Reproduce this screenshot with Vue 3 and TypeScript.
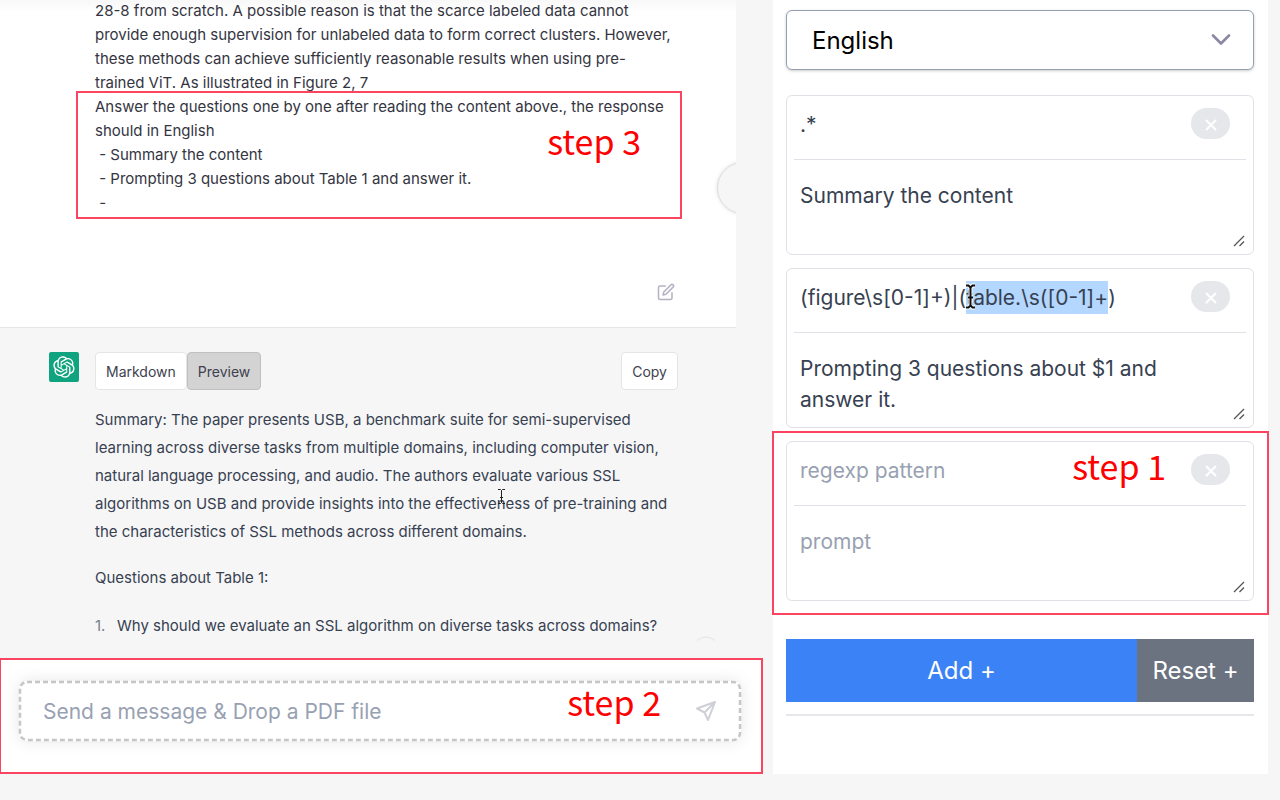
<script setup lang="ts">
import { onMounted, ref } from 'vue'

interface Rule {
  id: number
  pattern: string
  prompt: string
}

const rules = ref<Rule[]>([
  { id: 1, pattern: '.*', prompt: 'Summary the content' },
  { id: 2, pattern: '(figure\\s[0-1]+)|(table.\\s([0-1]+)', prompt: 'Prompting 3 questions about $1 and answer it.' },
  { id: 3, pattern: '', prompt: '' },
])

const language = ref('English')
const message = ref('')
const view = ref<'markdown' | 'preview'>('preview')
const panel = ref<HTMLElement | null>(null)

const paperLines = [
  '28-8 from scratch. A possible reason is that the scarce labeled data cannot',
  'provide enough supervision for unlabeled data to form correct clusters. However,',
  'these methods can achieve sufficiently reasonable results when using pre-',
  'trained ViT. As illustrated in Figure 2, 7',
].join('\n')

const questionLines = [
  'Answer the questions one by one after reading the content above., the response',
  'should in English',
  ' - Summary the content',
  ' - Prompting 3 questions about Table 1 and answer it.',
  ' -',
]

const summaryLines = [
  'Summary: The paper presents USB, a benchmark suite for semi-supervised',
  'learning across diverse tasks from multiple domains, including computer vision,',
  'natural language processing, and audio. The authors evaluate various SSL',
  'algorithms on USB and provide insights into the effectiveness of pre-training and',
  'the characteristics of SSL methods across different domains.',
].join('\n')

function addRule() {
  const id = Math.max(0, ...rules.value.map((r) => r.id)) + 1
  rules.value.push({ id, pattern: '', prompt: '' })
}

function removeRule(id: number) {
  rules.value = rules.value.filter((r) => r.id !== id)
}

function resetRules() {
  rules.value = [{ id: 1, pattern: '', prompt: '' }]
}

onMounted(() => {
  const field = panel.value?.querySelector<HTMLInputElement>('#pattern-2')
  if (field) {
    field.focus({ preventScroll: true })
    field.setSelectionRange(field.value.indexOf('table'), field.value.length - 1)
  }
})
</script>

<template>
  <div class="page">
    <main class="left">
      <div class="chat">
        <section class="user">
          <div class="user-text">
            <p class="lines">{{ paperLines }}</p>
            <div class="question">
              <p v-for="line in questionLines" :key="line" class="lines">{{ line }}</p>
              <div class="callout callout-3"><span class="step">step 3</span></div>
            </div>
          </div>
          <button class="icon-btn edit" type="button" aria-label="Edit message">
            <svg width="18" height="18" viewBox="0 0 24 24" fill="none" stroke="currentColor" stroke-width="2" stroke-linecap="round" stroke-linejoin="round">
              <path d="M11 4H4a2 2 0 0 0-2 2v14a2 2 0 0 0 2 2h14a2 2 0 0 0 2-2v-7" />
              <path d="M18.500 2.500a2.121 2.121 0 0 1 3 3L12 15l-4 1 1-4 9.500-9.500z" />
            </svg>
          </button>
          <div class="bubble"></div>
        </section>

        <section class="assistant">
          <div class="avatar">
            <svg width="22" height="22" viewBox="0 0 41 41" fill="currentColor">
              <path d="M37.5324 16.8707C37.9808 15.5241 38.1363 14.0974 37.9886 12.6859C37.8409 11.2744 37.3934 9.91076 36.676 8.68622C35.6126 6.83404 33.9882 5.3676 32.0373 4.4985C30.0864 3.62941 27.9098 3.40259 25.8215 3.85078C24.8796 2.7893 23.7219 1.94125 22.4257 1.36341C21.1295 0.785575 19.7249 0.491269 18.3058 0.500197C16.1708 0.495044 14.0893 1.16803 12.3614 2.42214C10.6335 3.67624 9.34853 5.44666 8.6917 7.47815C7.30085 7.76286 5.98686 8.3414 4.8377 9.17505C3.68854 10.0087 2.73073 11.0782 2.02839 12.312C0.956464 14.1591 0.498905 16.2988 0.721698 18.4228C0.944492 20.5467 1.83612 22.5449 3.268 24.1293C2.81966 25.4759 2.66413 26.9026 2.81182 28.3141C2.95951 29.7256 3.40701 31.0892 4.12437 32.3138C5.18791 34.1659 6.8123 35.6322 8.76321 36.5013C10.7141 37.3704 12.8907 37.5973 14.9789 37.1492C15.9208 38.2107 17.0786 39.0587 18.3747 39.6366C19.6709 40.2144 21.0755 40.5087 22.4946 40.4998C24.6307 40.5054 26.7133 39.8321 28.4418 38.5772C30.1704 37.3223 31.4556 35.5506 32.1119 33.5179C33.5027 33.2332 34.8167 32.6547 35.9659 31.821C37.115 30.9874 38.0728 29.9178 38.7752 28.684C39.8458 26.8371 40.3023 24.6979 40.0789 22.5748C39.8556 20.4517 38.9639 18.4544 37.5324 16.8707ZM22.4978 37.8849C20.7443 37.8874 19.0459 37.2733 17.6994 36.1501C17.7601 36.117 17.8666 36.0586 17.936 36.0161L25.9004 31.4156C26.1003 31.3019 26.2663 31.137 26.3813 30.9378C26.4964 30.7386 26.5563 30.5124 26.5549 30.2825V19.0542L29.9213 20.998C29.9389 21.0068 29.9541 21.0198 29.9656 21.0359C29.977 21.052 29.9842 21.0707 29.9867 21.0902V30.3889C29.9842 32.375 29.1946 34.2791 27.7909 35.6841C26.3872 37.0892 24.4838 37.8806 22.4978 37.8849ZM6.39227 31.0064C5.51397 29.4888 5.19742 27.7107 5.49804 25.9832C5.55718 26.0187 5.66048 26.0818 5.73461 26.1244L13.699 30.7248C13.8975 30.8408 14.1233 30.902 14.3532 30.902C14.583 30.902 14.8088 30.8408 15.0073 30.7248L24.731 25.1103V28.9979C24.7321 29.0177 24.7283 29.0376 24.7199 29.0556C24.7115 29.0736 24.6988 29.0893 24.6829 29.1012L16.6317 33.7497C14.9096 34.7416 12.8643 35.0097 10.9447 34.4954C9.02506 33.9811 7.38785 32.7263 6.39227 31.0064ZM4.29707 13.6194C5.17156 12.0998 6.55279 10.9364 8.19885 10.3327C8.19885 10.4013 8.19491 10.5228 8.19491 10.6071V19.808C8.19351 20.0378 8.25334 20.2638 8.36823 20.4629C8.48312 20.6619 8.64893 20.8267 8.84863 20.9404L18.5723 26.5542L15.206 28.4979C15.1894 28.5089 15.1703 28.5155 15.1505 28.5173C15.1307 28.5191 15.1107 28.516 15.0924 28.5082L7.04046 23.8557C5.32135 22.8601 4.06716 21.2235 3.55289 19.3046C3.03862 17.3858 3.30624 15.3413 4.29707 13.6194ZM31.955 20.0556L22.2312 14.4411L25.5976 12.4981C25.6142 12.4872 25.6333 12.4805 25.6531 12.4787C25.6729 12.4769 25.6928 12.4801 25.7111 12.4879L33.7631 17.1364C34.9967 17.849 36.0017 18.8982 36.6606 20.1613C37.3194 21.4244 37.6047 22.849 37.4832 24.2684C37.3617 25.6878 36.8382 27.0432 35.9743 28.1759C35.1103 29.3086 33.9415 30.1717 32.6047 30.6641C32.6047 30.5947 32.6047 30.4733 32.6047 30.3889V21.188C32.6066 20.9586 32.5474 20.7328 32.4332 20.5338C32.319 20.3348 32.154 20.1698 31.955 20.0556ZM35.3055 15.0128C35.2464 14.9765 35.1431 14.9142 35.069 14.8717L27.1045 10.2712C26.906 10.1554 26.6803 10.0943 26.4504 10.0943C26.2206 10.0943 25.9948 10.1554 25.7963 10.2712L16.0726 15.8858V11.9982C16.0715 11.9783 16.0753 11.9585 16.0837 11.9405C16.0921 11.9225 16.1048 11.9068 16.1207 11.8949L24.1719 7.25025C25.4053 6.53903 26.8158 6.19376 28.2383 6.25482C29.6608 6.31589 31.0364 6.78077 32.2044 7.59508C33.3723 8.40939 34.2842 9.53945 34.8334 10.8531C35.3826 12.1667 35.5464 13.6095 35.3055 15.0128ZM14.2424 21.9419L10.8752 19.9981C10.8576 19.9893 10.8423 19.9763 10.8309 19.9602C10.8195 19.9441 10.8122 19.9254 10.8098 19.9058V10.6071C10.8107 9.18295 11.2173 7.78848 11.9819 6.58696C12.7466 5.38544 13.8377 4.42659 15.1275 3.82264C16.4173 3.21869 17.8524 2.99464 19.2649 3.1767C20.6775 3.35876 22.0089 3.93941 23.1034 4.85067C23.0427 4.88379 22.937 4.94215 22.8668 4.98473L14.9024 9.58517C14.7025 9.69878 14.5366 9.86356 14.4215 10.0626C14.3065 10.2616 14.2466 10.4877 14.2479 10.7175L14.2424 21.9419ZM16.071 17.9991L20.4018 15.4978L24.7325 17.9975V22.9985L20.4018 25.4983L16.071 22.9985V17.9991Z" />
            </svg>
          </div>
          <div class="answer">
            <div class="toolbar">
              <button class="tab" :class="{ active: view === 'markdown' }" type="button" @click="view = 'markdown'">Markdown</button>
              <button class="tab" :class="{ active: view === 'preview' }" type="button" @click="view = 'preview'">Preview</button>
              <button class="tab copy" type="button">Copy</button>
            </div>
            <div class="summary">
              <p class="lines">{{ summaryLines }}</p>
              <svg class="ibeam" width="9" height="17" viewBox="0 0 9 17" fill="none" stroke="#222" stroke-width="1">
                <path d="M1 1.500h2.500l1 1 1-1H8M4.500 2.500v12M1 15.500h2.500l1-1 1 1H8M3 9.500h3" />
              </svg>
            </div>
            <p class="about">Questions about Table 1:</p>
            <ol class="list">
              <li><span class="num">1.</span>Why should we evaluate an SSL algorithm on diverse tasks across domains?</li>
            </ol>
          </div>
          <svg class="arc" width="20" height="6" viewBox="0 0 20 6" fill="none" stroke="#e4e4e9" stroke-width="1">
            <path d="M1 4.500Q10-2.500 19 4.500" />
          </svg>
        </section>
      </div>

      <form class="composer" @submit.prevent>
        <div class="drop">
          <svg class="dashes" fill="none" stroke="#c6c6c6" stroke-width="2.500" stroke-dasharray="5 3">
            <rect width="100%" height="100%" rx="7" />
          </svg>
          <input v-model="message" type="text" aria-label="Message" placeholder="Send a message &amp; Drop a PDF file" />
          <button class="icon-btn send" type="submit" aria-label="Send">
            <svg width="22" height="22" viewBox="0 0 22 22" fill="none" stroke="currentColor" stroke-width="2" stroke-linejoin="round">
              <path d="M20 2 2 8.500l7.500 4L13 20zM20 2 9.500 12.500" />
            </svg>
          </button>
        </div>
        <span class="step step-2">step 2</span>
      </form>
    </main>

    <aside ref="panel" class="panel">
      <div class="select">
        <select v-model="language" aria-label="Language">
          <option>English</option>
        </select>
        <svg class="chevron" width="20" height="12" viewBox="0 0 20 12" fill="none" stroke="#8a89a3" stroke-width="2.600" stroke-linecap="round" stroke-linejoin="round">
          <path d="M2 1.500l8 8 8-8" />
        </svg>
      </div>

      <div class="cards">
        <div v-for="rule in rules" :key="rule.id" class="card">
          <div class="card-top">
            <input :id="`pattern-${rule.id}`" v-model="rule.pattern" class="pattern" type="text" aria-label="Pattern" placeholder="regexp pattern" spellcheck="false" />
            <button class="remove" type="button" aria-label="Remove" @click="removeRule(rule.id)">
              <svg width="12" height="12" viewBox="0 0 12 12" fill="none" stroke="#fff" stroke-width="2" stroke-linecap="round">
                <path d="M1.500 1.500l9 9M10.500 1.500l-9 9" />
              </svg>
            </button>
            <svg v-if="rule.id === 2" class="ibeam-big" width="13" height="27" viewBox="0 0 13 27" fill="none">
              <path d="M2 2.500h2.500l2 2 2-2H11M6.500 4.500v18M2 24.500h2.500l2-2 2 2H11M4 14.500h5" stroke="#fff" stroke-width="4" />
              <path d="M2 2.500h2.500l2 2 2-2H11M6.500 4.500v18M2 24.500h2.500l2-2 2 2H11M4 14.500h5" stroke="#111" stroke-width="2" />
            </svg>
          </div>
          <textarea v-model="rule.prompt" class="prompt" aria-label="Prompt" placeholder="prompt" spellcheck="false"></textarea>
          <svg class="grip" width="12" height="12" viewBox="0 0 12 12" stroke="#555" stroke-width="1.300">
            <path d="M1 11L11 1M6.500 11L11 6.500" />
          </svg>
          <div v-if="rule.id === 3" class="callout callout-1"><span class="step">step 1</span></div>
        </div>
      </div>

      <div class="actions">
        <button class="add" type="button" @click="addRule">Add +</button>
        <button class="reset" type="button" @click="resetRules">Reset +</button>
      </div>
      <hr />
    </aside>
  </div>
</template>

<style>
body {
  margin: 0;
  background: #f6f6f6;
}
</style>

<style scoped>
.page {
  display: grid;
  grid-template-columns: minmax(0, 763fr) minmax(0, 495fr);
  gap: 10px;
  padding: 0 12px 26px 0;
  align-items: stretch;
  font-family: Inter, "Liberation Sans", sans-serif;
  color: #343541;
  overflow: hidden;
}
.page *,
.page *::before {
  box-sizing: border-box;
}
p,
ol {
  margin: 0;
  padding: 0;
  list-style: none;
}
button,
input,
select,
textarea {
  font-family: inherit;
  color: inherit;
  margin: 0;
}
.left {
  display: flex;
  flex-direction: column;
}
.chat {
  margin-right: 27px;
  flex: 1;
}
.lines {
  white-space: pre;
}
.user {
  position: relative;
  overflow: hidden;
  display: flex;
  flex-direction: column;
  gap: 68px;
  padding: 0 58px 26px 95px;
  background: linear-gradient(#f8f8f8, #fff 12px);
  border-bottom: 1px solid #e6e6e6;
}
.user-text {
  margin-top: -1px;
  font-size: 15px;
  line-height: 24px;
}
.question {
  position: relative;
}
.question .lines {
  width: fit-content;
}
.callout {
  position: absolute;
  border: 2px solid #fb4560;
  pointer-events: none;
}
.callout-3 {
  inset: -4px -4px -4px -19px;
}
.step {
  position: absolute;
  color: #f00;
  font-family: "Noto Sans CJK SC", sans-serif;
  font-size: 34px;
  line-height: 40px;
  white-space: nowrap;
  pointer-events: none;
}
.callout-3 .step {
  right: 39px;
  top: 28px;
}
.icon-btn {
  border: 0;
  background: none;
  padding: 0;
  display: flex;
}
.edit {
  align-self: flex-end;
  margin-right: 3px;
  color: #b3b3c3;
}
.bubble {
  position: absolute;
  right: -33px;
  top: 162px;
  width: 52px;
  height: 52px;
  border-radius: 50%;
  border: 1px solid #dedede;
  background: #f6f6f6;
  box-shadow: 0 0 4px rgba(0, 0, 0, 0.12);
}
.assistant {
  position: relative;
  display: flex;
  gap: 16px;
  padding: 24px 58px 18px 49px;
}
.avatar {
  flex: none;
  display: flex;
  align-items: center;
  justify-content: center;
  width: 30px;
  height: 30px;
  border-radius: 2px;
  background: #10a37f;
  color: #fff;
}
.answer {
  flex: 1;
  min-width: 0;
  font-size: 15px;
  line-height: 28px;
  color: #374151;
}
.toolbar {
  display: flex;
  margin-bottom: 16px;
}
.tab {
  height: 38px;
  padding: 0 10px;
  border: 1px solid #e5e5e5;
  border-radius: 4px;
  background: #fff;
  color: #40414f;
  font-size: 14px;
}
.tab.active {
  background: #d3d3d3;
  border-color: #c0c0c0;
}
.copy {
  margin-left: auto;
}
.summary {
  position: relative;
  margin-bottom: 18px;
}
.ibeam {
  position: absolute;
  left: 402px;
  top: 82px;
}
.about {
  margin-bottom: 20px;
}
.list li {
  display: flex;
  white-space: nowrap;
}
.num {
  width: 22px;
  color: #7b8190;
}
.arc {
  position: absolute;
  right: 20px;
  bottom: 16px;
}
.composer {
  position: relative;
  border: 2px solid #fb4560;
  border-left-width: 1px;
  background: #fff;
  padding: 21px 20px 31px 18px;
}
.drop {
  position: relative;
  display: flex;
  align-items: center;
  height: 60px;
  padding: 0 24px;
  border-radius: 8px;
  box-shadow: 0 0 16px rgba(0, 0, 0, 0.1);
}
.dashes {
  position: absolute;
  left: 1px;
  top: 1px;
  width: calc(100% - 2px);
  height: calc(100% - 2px);
  overflow: visible;
  pointer-events: none;
}
.drop input {
  flex: 1;
  min-width: 0;
  border: 0;
  padding: 0;
  outline: 0;
  background: none;
  font-size: 21px;
}
.drop input::placeholder {
  color: #98a1b2;
  opacity: 1;
}
.send {
  color: #cfcfd8;
}
.step-2 {
  right: 100px;
  top: 22px;
}
.panel {
  background: #fff;
  padding: 10px 14px 57px 13px;
}
.select {
  position: relative;
  margin-bottom: 25px;
}
.select select {
  display: block;
  width: 100%;
  height: 60px;
  padding: 0 25px;
  border: 1px solid #94a0b0;
  border-radius: 6px;
  background: #fff;
  box-shadow: 0 1px 3px rgba(0, 0, 0, 0.2);
  color: #000;
  font-size: 24px;
  appearance: none;
}
.chevron {
  position: absolute;
  right: 23px;
  top: 24px;
  pointer-events: none;
}
.cards {
  display: flex;
  flex-direction: column;
  gap: 13px;
}
.card {
  position: relative;
  padding: 0 7px;
  border: 1px solid #dfe1e6;
  border-radius: 6px;
  font-size: 21px;
  line-height: 31px;
  color: #374151;
}
.card-top {
  position: relative;
  display: flex;
  align-items: flex-start;
  padding: 12px 16px 18px 6px;
  border-bottom: 1px solid #dfe1e6;
}
.pattern {
  flex: 1;
  min-width: 0;
  height: 33px;
  border: 0;
  padding: 0;
  outline: 0;
  background: none;
  font-size: 21px;
  line-height: 33px;
}
.pattern::selection {
  background: #b3d7ff;
  color: #374151;
}
.pattern::placeholder,
.prompt::placeholder {
  color: #98a1b2;
  opacity: 1;
}
.remove {
  display: flex;
  align-items: center;
  justify-content: center;
  width: 39px;
  height: 31px;
  padding: 2px 0 0;
  border: 0;
  border-radius: 16px;
  background: #e5e7eb;
}
.ibeam-big {
  position: absolute;
  left: 170px;
  top: 14px;
}
.prompt {
  display: block;
  width: 100%;
  height: 94px;
  padding: 20px 24px 0 6px;
  border: 0;
  outline: 0;
  background: none;
  resize: none;
  font-size: 21px;
  line-height: 31px;
  overflow: hidden;
}
.grip {
  position: absolute;
  right: 8px;
  bottom: 7px;
}
.callout-1 {
  inset: -11px -16px -15px -15px;
}
.callout-1 .step {
  right: 101px;
  top: 13px;
}
.actions {
  display: flex;
  margin-top: 38px;
}
.actions button {
  height: 63px;
  border: 0;
  color: #fff;
  font-size: 24px;
}
.add {
  flex: 1;
  background: #3b82f6;
}
.reset {
  width: 117px;
  padding: 0;
  background: #6b7280;
}
hr {
  margin: 12px 0 0;
  border: 0;
  border-top: 2px solid #e5e7eb;
}
</style>
